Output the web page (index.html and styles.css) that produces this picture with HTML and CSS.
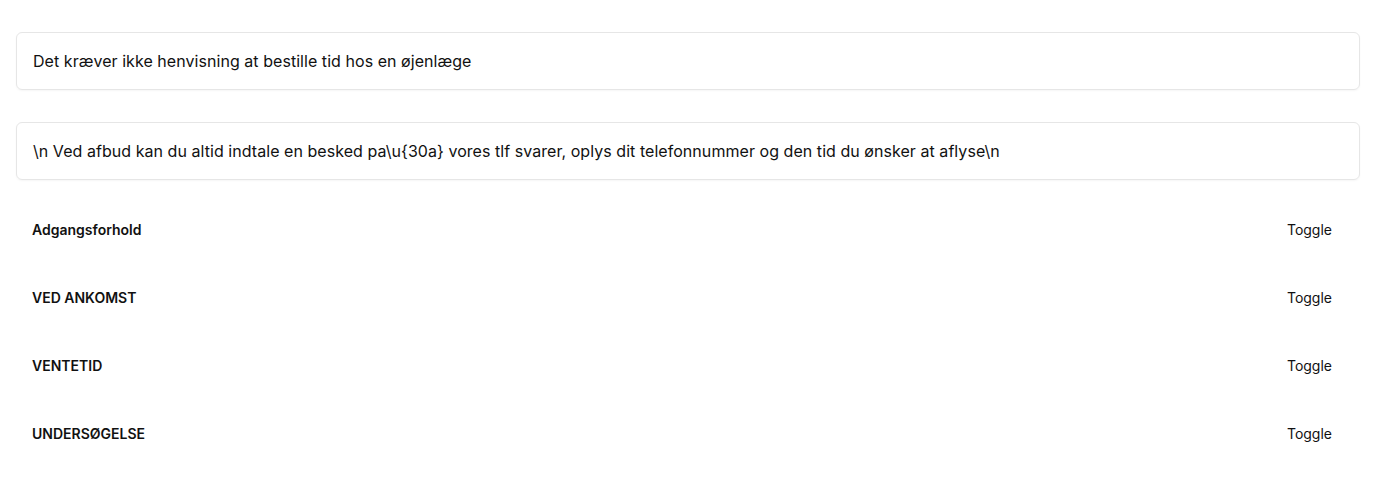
FILE: index.html
```html
<!DOCTYPE html>
<html lang="da">
<head>
<meta charset="utf-8">
<link rel="stylesheet" href="styles.css">
</head>
<body>
<main class="page">
  <div class="card">Det kræver ikke henvisning at bestille tid hos en øjenlæge</div>
  <div class="card">\n Ved afbud kan du altid indtale en besked pa\u{30a} vores tlf svarer, oplys dit telefonnummer og den tid du ønsker at aflyse\n</div>
  <div class="row"><span class="row-title">Adgangsforhold</span><button class="toggle" type="button">Toggle</button></div>
  <div class="row"><span class="row-title">VED ANKOMST</span><button class="toggle" type="button">Toggle</button></div>
  <div class="row"><span class="row-title">VENTETID</span><button class="toggle" type="button">Toggle</button></div>
  <div class="row"><span class="row-title">UNDERSØGELSE</span><button class="toggle" type="button">Toggle</button></div>
</main>
</body>
</html>
```
FILE: styles.css
```css
* { box-sizing: border-box; }
html, body { margin: 0; background: #fff; }
body {
  font-family: Inter, "Noto Sans", sans-serif;
  color: #111111;
}
.page {
  display: flex;
  flex-direction: column;
  gap: 32px;
  padding: 32px 16px;
}
.card {
  border: 1px solid #e6e6e6;
  border-radius: 6px;
  box-shadow: 0 1px 2px rgba(0,0,0,0.04);
  padding: 16px;
  font-size: 16px;
  line-height: 24px;
  font-weight: 400;
  letter-spacing: 0.05px;
}
.row {
  display: flex;
  align-items: center;
  justify-content: space-between;
  padding: 8px 16px;
}
.row-title {
  font-size: 14px;
  line-height: 20px;
  font-weight: 600;
}
.toggle {
  font-family: Inter, "Noto Sans", sans-serif;
  font-size: 14px;
  line-height: 20px;
  font-weight: 400;
  color: #111111;
  background: none;
  border: 0;
  padding: 0 12px;
  cursor: pointer;
}
```
